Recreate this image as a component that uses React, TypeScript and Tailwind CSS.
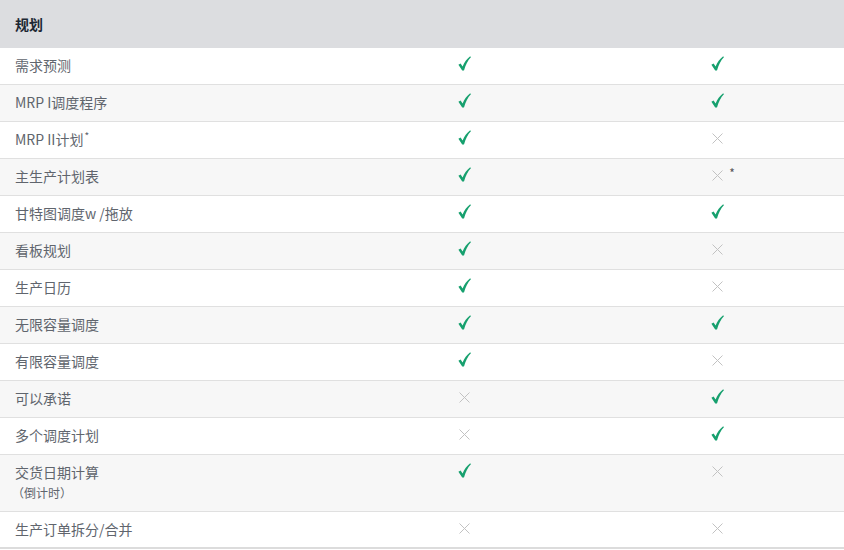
import React from 'react';

type Mark = 'yes' | 'no' | 'no*';

interface Row {
  label: React.ReactNode;
  sub?: string;
  a: Mark;
  b: Mark;
}

const rows: Row[] = [
  { label: '需求预测', a: 'yes', b: 'yes' },
  { label: 'MRP I调度程序', a: 'yes', b: 'yes' },
  { label: <>MRP II计划<span className="relative -top-[5px] ml-[1px] text-[10px]">*</span></>, a: 'yes', b: 'no' },
  { label: '主生产计划表', a: 'yes', b: 'no*' },
  { label: '甘特图调度w /拖放', a: 'yes', b: 'yes' },
  { label: '看板规划', a: 'yes', b: 'no' },
  { label: '生产日历', a: 'yes', b: 'no' },
  { label: '无限容量调度', a: 'yes', b: 'yes' },
  { label: '有限容量调度', a: 'yes', b: 'no' },
  { label: '可以承诺', a: 'no', b: 'yes' },
  { label: '多个调度计划', a: 'no', b: 'yes' },
  { label: '交货日期计算', sub: '（倒计时）', a: 'yes', b: 'no' },
  { label: '生产订单拆分/合并', a: 'no', b: 'no' },
];

// green tick used for supported features
const Check = () => (
  <svg width="13" height="15" viewBox="0 0 13 15" className="block">
    <path
      d="M0.4 8.8 L2.6 7.6 L4.6 10.6 C6.3 6.4 8.7 3 12.2 0.3 L12.9 1.2 C9.8 4.4 7.6 8.6 6 14.6 L4.2 14.6 Z"
      fill="#16a06e"
    />
  </svg>
);

// thin grey cross for unsupported features
const Cross = () => (
  <svg width="11" height="11" viewBox="0 0 11 11" className="block">
    <path d="M0.5 0.5 L10.5 10.5 M10.5 0.5 L0.5 10.5" stroke="#c2c2c2" strokeWidth="1" />
  </svg>
);

const Cell = ({ mark }: { mark: Mark }) => (
  <div className="flex w-[253px] justify-center">
    {mark === 'yes' && (
      <div className="pt-[8px]">
        <Check />
      </div>
    )}
    {mark === 'no' && (
      <div className="pt-[11px]">
        <Cross />
      </div>
    )}
    {mark === 'no*' && (
      <div className="flex items-start gap-[6px] pl-[12px] pt-[11px]">
        <Cross />
        <span className="-mt-[3px] text-[12px] leading-3 text-[#555]">*</span>
      </div>
    )}
  </div>
);

export default function App() {
  return (
    <div
      className="h-[550px] w-[844px] overflow-hidden bg-white text-[14px]"
      style={{ fontFamily: '"Noto Sans CJK SC", "Liberation Sans", sans-serif' }}
    >
      <div className="flex h-[48px] items-center bg-[#dcdde0] px-[15px] pt-[1px] font-bold text-[#1d2833]">规划</div>
      {rows.map((r, i) => (
        <div
          key={i}
          className={`flex border-b ${r.sub ? 'h-[57px]' : 'h-[37px]'} ${
            i === rows.length - 1 ? 'border-b-2 border-[#dcdcdc]' : 'border-[#e0e0e0]'
          } ${i % 2 === 1 ? 'bg-[#f7f7f7]' : 'bg-white'}`}
        >
          <div className="w-[338px] px-[15px] pt-[7px] leading-5 text-[#60656d]">
            <div>{r.label}</div>
            {r.sub && <div className="-ml-[3px] mt-[1px] text-[12px] leading-5">{r.sub}</div>}
          </div>
          <Cell mark={r.a} />
          <Cell mark={r.b} />
        </div>
      ))}
    </div>
  );
}
